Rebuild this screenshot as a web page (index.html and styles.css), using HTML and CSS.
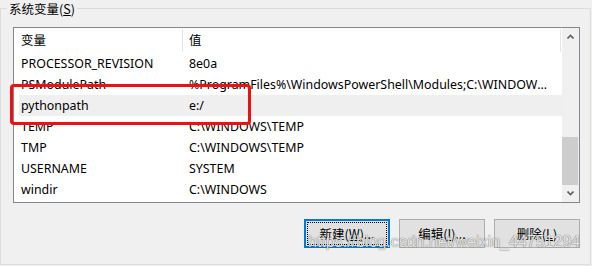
FILE: index.html
```html
<!DOCTYPE html>
<html lang="zh-CN">
<head>
    <meta charset="UTF-8">
    <title>系统变量</title>
    <link rel="stylesheet" href="styles.css">
</head>
<body>
    <fieldset class="group">
        <legend>系统变量(<u>S</u>)</legend>

        <div class="listview">
            <div class="list-main">
                <div class="list-header">
                    <div class="hcell">变量</div>
                    <div class="hcell">值</div>
                </div>
                <div class="row"><div class="cell">PROCESSOR_REVISION</div><div class="cell">8e0a</div></div>
                <div class="row"><div class="cell">PSModulePath</div><div class="cell">%ProgramFiles%\WindowsPowerShell\Modules;C:\WINDOWS\system32\WindowsPowerShell\v1.0\Modules</div></div>
                <div class="row selected"><div class="cell">pythonpath</div><div class="cell">e:/</div></div>
                <div class="row"><div class="cell">TEMP</div><div class="cell">C:\WINDOWS\TEMP</div></div>
                <div class="row"><div class="cell">TMP</div><div class="cell">C:\WINDOWS\TEMP</div></div>
                <div class="row"><div class="cell">USERNAME</div><div class="cell">SYSTEM</div></div>
                <div class="row"><div class="cell">windir</div><div class="cell">C:\WINDOWS</div></div>
            </div>
            <div class="scrollbar">
                <div class="sb-btn">
                    <svg width="7" height="5" viewBox="0 0 7 5"><polyline points="0.5,4.5 3.5,1.5 6.5,4.5" fill="none" stroke="#606060" stroke-width="1.6"/></svg>
                </div>
                <div class="sb-track"><div class="sb-thumb"></div></div>
                <div class="sb-btn">
                    <svg width="7" height="5" viewBox="0 0 7 5"><polyline points="0.5,0.5 3.5,3.5 6.5,0.5" fill="none" stroke="#606060" stroke-width="1.6"/></svg>
                </div>
            </div>
            <div class="mark"></div>
        </div>

        <div class="buttons">
            <button class="btn focused">新建(<u>W</u>)...</button>
            <button class="btn">编辑(<u>I</u>)...</button>
            <button class="btn">删除(<u>L</u>)</button>
        </div>
    </fieldset>

    <div class="watermark">https://blog.csdn.net/weixin_44751294</div>
</body>
</html>
```

FILE: styles.css
```css
body {
    margin: 0;
    width: 592px;
    height: 266px;
    overflow: hidden;
    background: #f0f0f0;
    color: #000;
    font: 12.4px "Noto Sans", "Noto Sans CJK SC", sans-serif;
    position: relative;
}

.group {
    margin: 0 1px 0 0;
    padding: 0 10px 15px 12px;
    border: 1px solid #dcdcdc;
    height: 265px;
    box-sizing: border-box;
}
.group legend {
    margin-left: -6px;
    padding: 0 2px;
    line-height: 17px;
    font-size: 12.5px;
    font-family: "Noto Sans CJK SC", sans-serif;
}

.listview {
    position: relative;
    margin-top: 10px;
    height: 176px;
    border: 1px solid #828790;
    background: #fff;
    display: flex;
    box-sizing: border-box;
}
.list-main { flex: 1; min-width: 0; }

.list-header {
    display: grid;
    grid-template-columns: 169px 1fr;
    height: 25px;
}
.hcell {
    padding-left: 7px;
    font-family: "Noto Sans CJK SC", sans-serif;
    border-right: 1px solid #e5e5e5;
    margin: 1px 0;
    line-height: 23px;
}
.hcell + .hcell { padding-left: 6px; margin-right: 1px; }

.row {
    display: grid;
    grid-template-columns: 168px 1fr;
    height: 21px;
    line-height: 21px;
    margin-left: 5px;
}
.row.selected { background: #efefef; }
.cell {
    padding-left: 2px;
    white-space: nowrap;
    overflow: hidden;
    text-overflow: ellipsis;
}
.cell + .cell { padding-right: 12px; }

.scrollbar {
    width: 17px;
    background: #f0f0f0;
    display: flex;
    flex-direction: column;
}
.sb-btn {
    height: 17px;
    display: flex;
    align-items: center;
    justify-content: center;
}
.sb-btn svg { display: block; }
.sb-track {
    flex: 1;
    display: flex;
    flex-direction: column;
    justify-content: flex-end;
}
.sb-thumb {
    height: 48px;
    margin: 0 1px 0 0;
    background: #cdcdcd;
}

.mark {
    position: absolute;
    left: -4px;
    top: 56px;
    width: 241px;
    height: 41px;
    border: 3px solid #f01010;
    border-radius: 4px;
    box-sizing: border-box;
}

.buttons {
    display: flex;
    justify-content: flex-end;
    gap: 9px;
    margin-top: 16px;
}
.btn {
    width: 86px;
    height: 29px;
    padding: 0;
    background: #e1e1e1;
    border: 1px solid #adadad;
    font: 12.5px "Noto Sans CJK SC", sans-serif;
    color: #000;
}
.btn.focused {
    border: 2px solid #0078d7;
    outline: 1px dotted #000;
    outline-offset: -4px;
}

.watermark {
    position: absolute;
    left: 308px;
    top: 234px;
    font: 16px/16px "Liberation Sans", sans-serif;
    color: rgba(255, 255, 255, 0.85);
    text-shadow: 0 0 1px rgba(0, 0, 0, 0.55), 0 0 1px rgba(0, 0, 0, 0.3);
    white-space: nowrap;
    pointer-events: none;
}
```
